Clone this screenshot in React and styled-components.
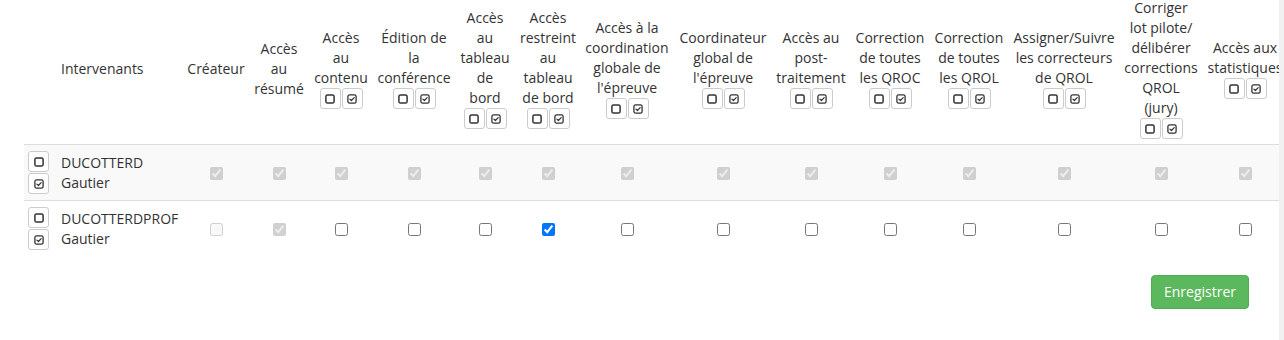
import React from "react";
import styled, { createGlobalStyle } from "styled-components";

const GlobalStyle = createGlobalStyle`
  html, body {
    margin: 0;
    padding: 0;
    background: #fff;
    font-family: "Open Sans", "Liberation Sans", sans-serif;
    font-size: 14px;
    line-height: 20px;
    color: #333;
  }
  * { box-sizing: border-box; }
`;

const Page = styled.div`
  display: flex;
  height: 340px;
  overflow: hidden;
`;

const Main = styled.div`
  flex: 1;
  min-width: 0;
  padding-left: 24px;
`;

const ScrollTrack = styled.div`
  width: 5px;
  background: #f1f1f1;
`;

const TableWrap = styled.div`
  overflow: hidden;
  margin-top: -2px;
`;

const Table = styled.table`
  table-layout: fixed;
  border-collapse: collapse;
  border-spacing: 0;
  width: 1263px;
  margin-bottom: 19px;
`;

const Th = styled.th`
  font-weight: normal;
  text-align: ${({ $left }) => ($left ? "left" : "center")};
  vertical-align: middle;
  padding: 0 ${({ $left }) => ($left ? "2px 5px 8px" : "2px 5px")};
  border-bottom: 1px solid #ddd;
  white-space: nowrap;
`;

const Row = styled.tr`
  background: ${({ $striped }) => ($striped ? "#f9f9f9" : "#fff")};
  border-top: ${({ $first }) => ($first ? "none" : "1px solid #ddd")};
`;

const Td = styled.td`
  padding: 5px;
  vertical-align: middle;
  text-align: center;
`;

const SelectCell = styled.td`
  padding: 6px 4px;
  vertical-align: middle;
`;

const NameCell = styled.td`
  padding: 5px 2px 5px 8px;
  vertical-align: middle;
  text-align: left;
  white-space: nowrap;
`;

const HeadLabel = styled.div`
  line-height: 20px;
`;

const BtnGroup = styled.div`
  display: inline-flex;
  flex-direction: ${({ $vertical }) => ($vertical ? "column" : "row")};
  gap: 1px;
  vertical-align: top;
`;

const XsButton = styled.button`
  width: 21px;
  height: 21px;
  padding: 0;
  margin: 0;
  display: flex;
  align-items: center;
  justify-content: center;
  background: #fff;
  border: 1px solid #ccc;
  border-radius: 3px;
  cursor: pointer;
`;

const Check = styled.input`
  margin: 0;
  width: 13px;
  height: 13px;
  vertical-align: middle;
`;

const Footer = styled.div`
  display: flex;
  justify-content: flex-end;
  padding-right: 30px;
`;

const SaveButton = styled.button`
  font-family: "Open Sans", "Liberation Sans", sans-serif;
  font-size: 14px;
  line-height: 20px;
  padding: 6px 12px;
  color: #fff;
  background: #5cb85c;
  border: 1px solid #4cae4c;
  border-radius: 4px;
  cursor: pointer;
`;

const SquareIcon = () => (
  <svg width="10" height="10" viewBox="0 0 10 10">
    <rect x="0.9" y="0.9" width="8.2" height="8.2" rx="1.6" fill="none" stroke="#333" strokeWidth="1.5" />
  </svg>
);

const CheckSquareIcon = () => (
  <svg width="10" height="10" viewBox="0 0 10 10">
    <rect x="0.9" y="0.9" width="8.2" height="8.2" rx="1.6" fill="none" stroke="#333" strokeWidth="1.3" />
    <path d="M2.9 5.1 L4.4 6.5 L7.2 3.6" fill="none" stroke="#333" strokeWidth="1.2" strokeLinecap="round" strokeLinejoin="round" />
  </svg>
);

const columns = [
  { w: 70, label: ["Créateur"] },
  { w: 56, label: ["Accès", "au", "résumé"] },
  { w: 68, label: ["Accès", "au", "contenu"], toggles: true },
  { w: 78, label: ["Édition de", "la", "conférence"], toggles: true },
  { w: 64, label: ["Accès", "au", "tableau", "de", "bord"], toggles: true },
  { w: 62, label: ["Accès", "restreint", "au", "tableau", "de bord"], toggles: true },
  { w: 96, label: ["Accès à la", "coordination", "globale de", "l'épreuve"], toggles: true },
  { w: 96, label: ["Coordinateur", "global de", "l'épreuve"], toggles: true },
  { w: 80, label: ["Accès au", "post-", "traitement"], toggles: true },
  { w: 78, label: ["Correction", "de toutes", "les QROC"], toggles: true },
  { w: 80, label: ["Correction", "de toutes", "les QROL"], toggles: true },
  { w: 110, label: ["Assigner/Suivre", "les correcteurs", "de QROL"], toggles: true },
  { w: 84, label: ["Corriger", "lot pilote/", "délibérer", "corrections", "QROL", "(jury)"], toggles: true },
  { w: 84, label: ["Accès aux", "statistiques"], toggles: true },
];

// d = disabled checked, o = disabled empty, x = checked, - = empty
const people = [
  { last: "DUCOTTERD", first: "Gautier", cells: "dddddddddddddd" },
  { last: "DUCOTTERDPROF", first: "Gautier", cells: "od---x--------" },
];

const Toggles = ({ vertical }) => (
  <BtnGroup $vertical={vertical}>
    <XsButton type="button">
      <SquareIcon />
    </XsButton>
    <XsButton type="button">
      <CheckSquareIcon />
    </XsButton>
  </BtnGroup>
);

const Cell = ({ code }) => {
  const disabled = code === "d" || code === "o";
  const checked = code === "d" || code === "x";
  return (
    <Td>
      <Check type="checkbox" disabled={disabled} checked={checked} readOnly />
    </Td>
  );
};

const App = () => {
  return (
    <>
      <GlobalStyle />
      <Page>
        <Main>
          <TableWrap>
            <Table>
              <colgroup>
                <col style={{ width: 29 }} />
                <col style={{ width: 128 }} />
                {columns.map((c, i) => (
                  <col key={i} style={{ width: c.w }} />
                ))}
              </colgroup>
              <thead>
                <tr>
                  <Th />
                  <Th $left>Intervenants</Th>
                  {columns.map((c, i) => (
                    <Th key={i}>
                      {c.label.map((line, j) => (
                        <HeadLabel key={j}>{line}</HeadLabel>
                      ))}
                      {c.toggles && <Toggles />}
                    </Th>
                  ))}
                </tr>
              </thead>
              <tbody>
                {people.map((p, i) => (
                  <Row key={i} $striped={i % 2 === 0} $first={i === 0}>
                    <SelectCell>
                      <Toggles vertical />
                    </SelectCell>
                    <NameCell>
                      {p.last}
                      <br />
                      {p.first}
                    </NameCell>
                    {p.cells.split("").map((code, j) => (
                      <Cell key={j} code={code} />
                    ))}
                  </Row>
                ))}
              </tbody>
            </Table>
          </TableWrap>
          <Footer>
            <SaveButton type="button">Enregistrer</SaveButton>
          </Footer>
        </Main>
        <ScrollTrack />
      </Page>
    </>
  );
};

export default App;
